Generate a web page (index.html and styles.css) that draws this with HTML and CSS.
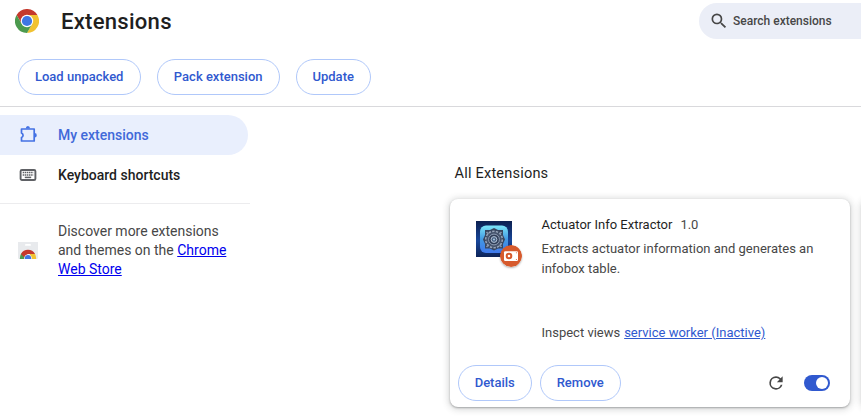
FILE: index.html
```html
<!DOCTYPE html>
<html lang="en">
<head>
<meta charset="utf-8">
<title>Extensions</title>
<link rel="stylesheet" href="styles.css">
</head>
<body>
<header class="toolbar">
  <div class="topbar">
    <svg class="logo" viewBox="0 0 24 24">
      <path fill="#c5392d" d="M1.6 6A12 12 0 0 1 22.4 6H12L6.8 15Z"/>
      <path fill="#f1c232" d="M22.4 6A12 12 0 0 1 12 24L17.2 15L12 6Z"/>
      <path fill="#4c9a4e" d="M12 24A12 12 0 0 1 1.6 6L6.8 15H17.2Z"/>
      <circle cx="12" cy="12" r="6.2" fill="#fff"/>
      <circle cx="12" cy="12" r="5.1" fill="#3f76e4"/>
    </svg>
    <h1>Extensions</h1>
    <div class="search">
      <svg viewBox="0 0 24 24" fill="#474747"><path d="M15.5 14h-.79l-.28-.27A6.47 6.47 0 0 0 16 9.5 6.5 6.5 0 1 0 9.5 16c1.61 0 3.09-.59 4.23-1.57l.27.28v.79l5 4.99L20.49 19l-4.99-5zm-6 0C7.01 14 5 11.99 5 9.5S7.01 5 9.5 5 14 7.01 14 9.5 11.99 14 9.5 14z"/></svg>
      <span>Search extensions</span>
    </div>
  </div>
  <div class="dev-actions">
    <button class="btn load">Load unpacked</button>
    <button class="btn pack">Pack extension</button>
    <button class="btn update">Update</button>
  </div>
</header>
<div class="content">
  <nav class="sidebar">
    <a class="item selected">
      <svg viewBox="0 0 20 20" fill="none" stroke="#4472e4" stroke-width="1.7" stroke-linejoin="round"><path d="M3.5 4H16.2V16H3.5V12.600C5.600 11.600 5.600 9 3.500 8Z"/><path fill="#4472e4" stroke="none" d="M7.800 3.600a2.100 2.500 0 0 1 4.200 0zM16.600 8a2.200 2.200 0 0 1 0 4.400z"/></svg>
      <span>My extensions</span>
    </a>
    <a class="item">
      <svg viewBox="0 0 20 20" fill="none" stroke="#5f6165"><rect x="2.600" y="5" width="14.800" height="10" rx="1.300" stroke-width="1.900"/><path stroke-width="1.500" stroke-dasharray="1.500 .6" d="M4.700 7.600H15.400M4.700 10H15.400"/><path stroke-width="1.500" d="M6.800 12.400H13.200"/></svg>
      <span>Keyboard shortcuts</span>
    </a>
    <div class="promo">
      <svg viewBox="0 0 20 18">
        <path fill="#e8eaed" d="M0 0H20V15.500Q20 17 18.500 17H1.500Q0 17 0 15.500Z"/>
        <rect x="7" y="2" width="6" height="1.800" rx=".9" fill="#fff"/>
        <path fill="#4c9a4e" d="M3.200 11.500Q1.800 14 1.800 17H8L6 12Z"/>
        <path fill="#f1c232" d="M16.800 11.500Q18.200 14 18.200 17H12L12 11.500Z"/>
        <path fill="#c5392d" d="M3 12A8 8 0 0 1 17 12H10L5.800 15Z"/>
        <path fill="#fff" d="M6 17A4 4.600 0 0 1 14 17Z"/>
        <path fill="#3f76e4" d="M6.700 17A3.300 3.900 0 0 1 13.300 17Z"/>
      </svg>
      <p>Discover more extensions and themes on the <a href="#">Chrome Web Store</a></p>
    </div>
  </nav>
  <main>
    <h2>All Extensions</h2>
    <div class="cards">
      <article class="card">
        <div class="info">
          <div class="icon">
            <svg viewBox="0 0 36 36">
              <defs>
                <linearGradient id="bg" x1="0" y1="0" x2="0" y2="1"><stop offset="0" stop-color="#0c2050"/><stop offset=".55" stop-color="#17469a"/><stop offset="1" stop-color="#0d2358"/></linearGradient>
                <linearGradient id="tile" x1="0" y1="0" x2="0" y2="1"><stop offset="0" stop-color="#7be6fa"/><stop offset=".5" stop-color="#4299e2"/><stop offset="1" stop-color="#3f79ed"/></linearGradient>
              </defs>
              <rect width="36" height="36" fill="url(#bg)"/>
              <rect x="4" y="4.500" width="28" height="27.500" rx="6" fill="url(#tile)"/>
              <path fill="#38465f" d="M9 9H14L18 7L22 9H27V14L29 18.500L27 23V27.500H22L18 29.500L14 27.500H9V23L7 18.500L9 14Z"/>
              <circle cx="18" cy="18.500" r="8.300" fill="#46546d" stroke="#98a5b9" stroke-width="1.500" stroke-dasharray="2.400 1.300"/>
              <circle cx="18" cy="18.500" r="5.400" fill="#303e58" stroke="#8d9cb3"/>
              <circle cx="18" cy="18.500" r="2.900" fill="#4a6384" stroke="#b4c2d5"/>
              <path stroke="#8896ac" stroke-width="1.600" d="M10.500 11l2 2M25.500 11l-2 2M10.500 26l2-2M25.500 26l-2-2"/>
              <circle cx="18" cy="18.500" r=".9" fill="#bbd7ec"/>
            </svg>
            <svg class="badge" viewBox="0 0 22 22">
              <circle cx="11" cy="11" r="11" fill="#d65a2d"/>
              <rect x="4" y="6.200" width="14" height="9.800" rx="1.200" fill="#fff"/>
              <circle cx="9" cy="11" r="2.300" fill="#fff" stroke="#d65a2d" stroke-width="2"/>
              <circle cx="16.400" cy="7.700" r=".5" fill="#d65a2d"/><circle cx="16.400" cy="14.400" r=".5" fill="#d65a2d"/>
            </svg>
          </div>
          <div class="text">
            <div class="name-row"><span class="name">Actuator Info Extractor</span><span>1.0</span></div>
            <p class="desc">Extracts actuator information and generates an infobox table.</p>
            <div class="inspect">Inspect views <a href="#">service worker (Inactive)</a></div>
          </div>
        </div>
        <div class="actions">
          <button class="btn details">Details</button>
          <button class="btn remove">Remove</button>
          <svg class="reload" viewBox="0 0 24 24" fill="#474747"><path d="M17.650 6.350A7.960 7.960 0 0 0 12 4a8 8 0 1 0 7.730 10h-2.080A6 6 0 1 1 12 6c1.660 0 3.140.69 4.220 1.780L13 11h7V4z"/></svg>
          <span class="toggle"></span>
        </div>
      </article>
      <article class="card"></article>
    </div>
  </main>
</div>
</body>
</html>
```

FILE: styles.css
```css
* { box-sizing: border-box; }
body {
  margin: 0;
  width: 861px;
  height: 416px;
  overflow: hidden;
  background: #fff;
  color: #474747;
  font: 13px/20px Roboto, "Liberation Sans", sans-serif;
}
h1, h2, p { margin: 0; }
.toolbar { height: 107px; border-bottom: 1px solid #d9d9dc; }
.topbar { display: flex; height: 59px; padding: 3px 0 20px 15px; align-items: center; }
.logo { width: 24px; height: 24px; }
h1 { margin-left: 22px; font-size: 22.1px; font-weight: 500; letter-spacing: .25px; line-height: 36px; color: #1f1f1f; }
.search {
  display: flex;
  align-items: center;
  width: 162px;
  height: 36px;
  margin-left: auto;
  padding-left: 10px;
  border-radius: 18px 0 0 18px;
  background: #ebeef7;
  font-size: 12px;
  font-weight: 500;
}
.search svg { width: 20px; height: 20px; margin-right: 4px; }
.dev-actions { display: flex; gap: 16px; padding-left: 18px; }
.btn {
  height: 36px;
  padding: 0 .6px 0 0;
  border: 1px solid #b0c8fa;
  border-radius: 18px;
  background: #fff;
  color: #3059cf;
  font: 500 13px/20px Roboto, sans-serif;
}
.load, .pack { width: 123px; }
.update { width: 75px; }
.details { width: 74px; }
.remove { width: 81px; }
.content { display: flex; height: 309px; }
.sidebar { width: 250px; flex: none; padding-top: 8px; }
.item {
  display: flex;
  align-items: center;
  width: 248px;
  height: 40px;
  padding-left: 18px;
  border-radius: 0 20px 20px 0;
  font-size: 14px;
  font-weight: 500;
  color: #1f1f1f;
}
.item svg { width: 20px; height: 20px; margin-right: 20px; }
.selected { background: #e9effd; color: #4169d9; }
.promo {
  display: flex;
  align-items: center;
  margin-top: 8px;
  padding: 18px 20px 0 18px;
  border-top: 1px solid #ececee;
  font-size: 14px;
  line-height: 19px;
}
.promo svg { flex: none; width: 20px; height: 18px; margin-right: 20px; }
.promo a { color: #0000ee; }
main { flex: none; width: 611px; padding: 56px 0 0 200px; overflow: hidden; }
h2 { padding-left: 4.6px; font-size: 14.6px; font-weight: 400; letter-spacing: .17px; line-height: 20px; color: #1f1f1f; }
.cards { display: flex; gap: 12px; margin-top: 16px; }
.card {
  display: flex;
  flex: none;
  flex-direction: column;
  width: 400px;
  height: 208px;
  border-radius: 8px;
  background: #fff;
  box-shadow: 0 1px 2px rgba(60, 64, 67, .38), 0 1px 6px 2px rgba(60, 64, 67, .18);
}
.info { display: flex; flex: 1; padding: 16px 20px 0 26px; }
.icon { position: relative; flex: none; width: 36px; height: 36px; margin: 6px 29.5px 0 0; }
.icon > svg { display: block; width: 36px; height: 36px; }
.icon > .badge { position: absolute; left: 24px; top: 24px; width: 22px; height: 22px; border-radius: 50%; box-shadow: 0 1px 2px rgba(0, 0, 0, .3); }
.text { flex: 1; }
.name-row { display: flex; gap: 8px; }
.name { color: #1f1f1f; }
.desc { margin-top: 4px; }
.inspect { margin-top: 44px; }
.inspect a { margin-left: .7px; color: #3059cf; }
.actions { display: flex; align-items: center; gap: 8px; height: 48px; padding: 0 20px 0 8px; }
.reload { width: 20px; height: 20px; margin: 0 10px 0 auto; }
.toggle { display: flex; justify-content: flex-end; align-items: center; width: 26px; height: 16px; padding: 2px; border-radius: 8px; background: #3059cf; }
.toggle::before { content: ""; width: 12px; height: 12px; border-radius: 50%; background: #fff; }
```
